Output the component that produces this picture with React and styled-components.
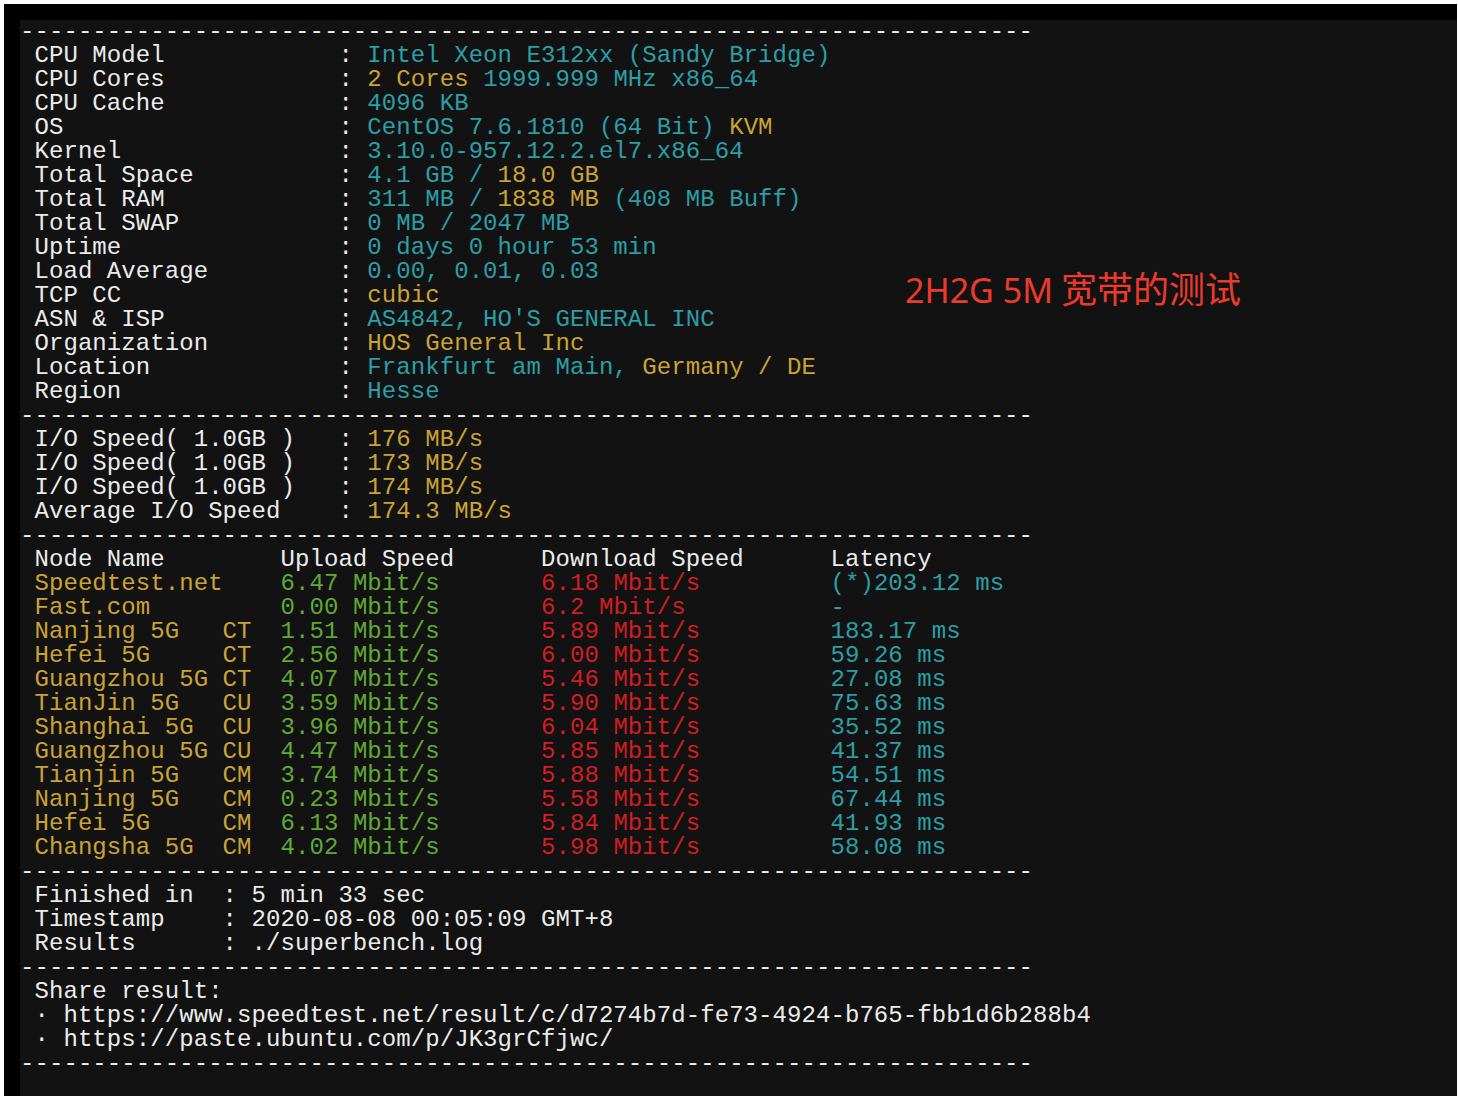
import React from 'react';
import styled, { createGlobalStyle } from 'styled-components';

const GlobalStyle = createGlobalStyle`
  html, body {
    margin: 0;
    padding: 0;
    background: #ffffff;
  }
  #root {
    width: 1458px;
    height: 1096px;
    overflow: hidden;
  }
`;

const tones = {
  w: '#ececec',
  c: '#2a9fa6',
  y: '#cba333',
  g: '#5fa933',
  r: '#d01e22',
};

const Page = styled.div`
  width: 1458px;
  height: 1096px;
  padding: 4px 1px 0 4px;
  box-sizing: border-box;
  display: flex;
`;

const Frame = styled.div`
  flex: 1;
  background: #000000;
  padding: 16px 0 0 16px;
  display: flex;
`;

const Terminal = styled.div`
  position: relative;
  flex: 1;
  background: #121212;
  display: flex;
  flex-direction: column;
  font-family: 'Liberation Mono', 'DejaVu Sans Mono', monospace;
  font-size: 24px;
  line-height: 24px;
  letter-spacing: 0.07px;
  color: ${tones.w};
`;

const Line = styled.div`
  height: 24px;
  white-space: pre;
`;

const Seg = styled.span`
  color: ${({ $tone }) => tones[$tone]};
`;

const Note = styled.div`
  position: absolute;
  left: 885px;
  top: 253px;
  display: flex;
  align-items: baseline;
  font-family: 'Noto Sans', 'Noto Sans CJK SC', sans-serif;
  font-size: 34px;
  line-height: 34px;
  letter-spacing: 0;
  color: #ec3a2c;
  white-space: pre;
`;

const Cjk = styled.span`
  margin-left: 8px;
  font-size: 36px;
`;

const DASHES = '-'.repeat(70);
const label = (text, width = 22) => (' ' + text).padEnd(width) + ': ';

const systemInfo = [
  ['CPU Model', [['Intel Xeon E312xx (Sandy Bridge)', 'c']]],
  ['CPU Cores', [['2 Cores', 'y'], [' 1999.999 MHz x86_64', 'c']]],
  ['CPU Cache', [['4096 KB', 'c']]],
  ['OS', [['CentOS 7.6.1810 (64 Bit)', 'c'], [' KVM', 'y']]],
  ['Kernel', [['3.10.0-957.12.2.el7.x86_64', 'c']]],
  ['Total Space', [['4.1 GB / ', 'c'], ['18.0 GB', 'y']]],
  ['Total RAM', [['311 MB / ', 'c'], ['1838 MB', 'y'], [' (408 MB Buff)', 'c']]],
  ['Total SWAP', [['0 MB / 2047 MB', 'c']]],
  ['Uptime', [['0 days 0 hour 53 min', 'c']]],
  ['Load Average', [['0.00, 0.01, 0.03', 'c']]],
  ['TCP CC', [['cubic', 'y']]],
  ['ASN & ISP', [["AS4842, HO'S GENERAL INC", 'c']]],
  ['Organization', [['HOS General Inc', 'y']]],
  ['Location', [['Frankfurt am Main, ', 'c'], ['Germany / DE', 'y']]],
  ['Region', [['Hesse', 'c']]],
];

const ioInfo = [
  ['I/O Speed( 1.0GB )', '176 MB/s'],
  ['I/O Speed( 1.0GB )', '173 MB/s'],
  ['I/O Speed( 1.0GB )', '174 MB/s'],
  ['Average I/O Speed', '174.3 MB/s'],
];

const nodes = [
  ['Speedtest.net', '', '6.47', '6.18', '(*)203.12 ms'],
  ['Fast.com', '', '0.00', '6.2', '-'],
  ['Nanjing 5G', 'CT', '1.51', '5.89', '183.17 ms'],
  ['Hefei 5G', 'CT', '2.56', '6.00', '59.26 ms'],
  ['Guangzhou 5G', 'CT', '4.07', '5.46', '27.08 ms'],
  ['TianJin 5G', 'CU', '3.59', '5.90', '75.63 ms'],
  ['Shanghai 5G', 'CU', '3.96', '6.04', '35.52 ms'],
  ['Guangzhou 5G', 'CU', '4.47', '5.85', '41.37 ms'],
  ['Tianjin 5G', 'CM', '3.74', '5.88', '54.51 ms'],
  ['Nanjing 5G', 'CM', '0.23', '5.58', '67.44 ms'],
  ['Hefei 5G', 'CM', '6.13', '5.84', '41.93 ms'],
  ['Changsha 5G', 'CM', '4.02', '5.98', '58.08 ms'],
];

const summary = [
  ['Finished in', '5 min 33 sec'],
  ['Timestamp', '2020-08-08 00:05:09 GMT+8'],
  ['Results', './superbench.log'],
];

const shareLinks = [
  'https://www.speedtest.net/result/c/d7274b7d-fe73-4924-b765-fbb1d6b288b4',
  'https://paste.ubuntu.com/p/JK3grCfjwc/',
];

function Divider() {
  return <Line>{DASHES}</Line>;
}

function NodeRow({ node }) {
  const [name, isp, up, down, latency] = node;
  const nameText = isp ? (' ' + name).padEnd(14) + isp : ' ' + name;
  return (
    <Line>
      <Seg $tone="y">{nameText.padEnd(18)}</Seg>
      <Seg $tone="g">{(up + ' Mbit/s').padEnd(18)}</Seg>
      <Seg $tone="r">{(down + ' Mbit/s').padEnd(20)}</Seg>
      <Seg $tone="c">{latency}</Seg>
    </Line>
  );
}

export default function App() {
  return (
    <>
      <GlobalStyle />
      <Page>
        <Frame>
          <Terminal>
            <Divider />
            {systemInfo.map(([name, parts]) => (
              <Line key={name}>
                {label(name)}
                {parts.map(([text, tone], i) => (
                  <Seg key={i} $tone={tone}>
                    {text}
                  </Seg>
                ))}
              </Line>
            ))}
            <Divider />
            {ioInfo.map(([name, value], i) => (
              <Line key={i}>
                {label(name)}
                <Seg $tone="y">{value}</Seg>
              </Line>
            ))}
            <Divider />
            <Line>
              {' Node Name'.padEnd(18) +
                'Upload Speed'.padEnd(18) +
                'Download Speed'.padEnd(20) +
                'Latency'}
            </Line>
            {nodes.map((node, i) => (
              <NodeRow key={i} node={node} />
            ))}
            <Divider />
            {summary.map(([name, value]) => (
              <Line key={name}>
                {label(name, 14)}
                {value}
              </Line>
            ))}
            <Divider />
            <Line> Share result:</Line>
            {shareLinks.map(link => (
              <Line key={link}>{' · ' + link}</Line>
            ))}
            <Divider />
            <Note>
              <span>2H2G 5M</span>
              <Cjk>宽带的测试</Cjk>
            </Note>
          </Terminal>
        </Frame>
      </Page>
    </>
  );
}
